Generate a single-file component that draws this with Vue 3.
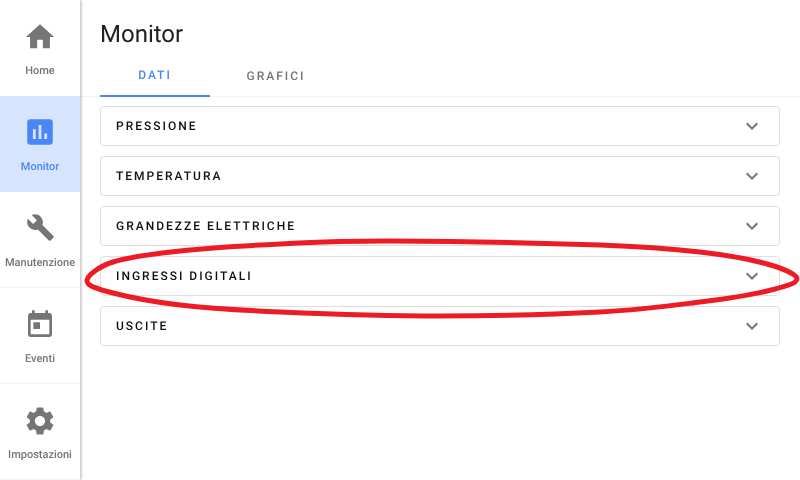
<script setup>
const nav = [
  { label: 'Home', size: 34, icon: 'M10 20v-6h4v6h5v-8h3L12 3 2 12h3v8z' },
  { label: 'Monitor', size: 34, active: true, icon: 'M19 3H5c-1.1 0-2 .9-2 2v14c0 1.1.9 2 2 2h14c1.100 0 2-.9 2-2V5c0-1.100-.9-2-2-2zM9 17H7v-7h2v7zm4 0h-2V7h2v10zm4 0h-2v-4h2v4z' },
  { label: 'Manutenzione', size: 29, icon: 'M22.700 19l-9.100-9.100c.9-2.300.4-5-1.500-6.900-2-2-5-2.400-7.400-1.300L9 6 6 9 1.600 4.700C.4 7.100.9 10.100 2.900 12.100c1.900 1.900 4.600 2.400 6.900 1.500l9.100 9.100c.4.400 1 .4 1.400 0l2.300-2.300c.5-.4.5-1.100.1-1.400z' },
  { label: 'Eventi', size: 32, icon: 'M19 3h-1V1h-2v2H8V1H6v2H5c-1.110 0-1.990.9-1.990 2L3 19c0 1.100.89 2 2 2h14c1.100 0 2-.9 2-2V5c0-1.100-.9-2-2-2zm0 16H5V8h14v11zM7 10h5v5H7z' },
  { label: 'Impostazioni', size: 34, icon: 'M19.140 12.940c.04-.3.06-.61.06-.94 0-.32-.02-.64-.07-.94l2.030-1.580c.18-.14.23-.41.12-.61l-1.920-3.320c-.12-.22-.37-.29-.59-.22l-2.390.96c-.5-.38-1.030-.7-1.620-.94l-.36-2.540c-.04-.24-.24-.41-.48-.41h-3.840c-.24 0-.43.17-.47.41l-.36 2.540c-.59.24-1.130.57-1.620.94l-2.390-.96c-.22-.08-.47 0-.59.22L2.740 8.870c-.12.21-.08.47.12.61l2.030 1.580c-.05.3-.09.63-.09.94s.02.64.07.94l-2.030 1.580c-.18.14-.23.41-.12.61l1.920 3.320c.12.22.37.29.59.22l2.390-.96c.5.38 1.030.7 1.620.94l.36 2.540c.05.24.24.41.48.41h3.840c.24 0 .44-.17.47-.41l.36-2.540c.59-.24 1.130-.56 1.620-.94l2.390.96c.22.08.47 0 .59-.22l1.920-3.320c.12-.22.07-.47-.12-.61l-2.010-1.580zM12 15.600c-1.980 0-3.600-1.620-3.600-3.600s1.620-3.600 3.600-3.600 3.600 1.620 3.600 3.600-1.620 3.600-3.600 3.600z' }
]
const panels = ['PRESSIONE', 'TEMPERATURA', 'GRANDEZZE ELETTRICHE', 'INGRESSI DIGITALI', 'USCITE']

// Hand-drawn loop traced from the reference, smoothed with a closed Catmull-Rom spline.
const pts = [
  [797, 279], [767, 291], [700, 302], [600, 312], [440, 316], [280, 312], [180, 305], [113, 293],
  [87, 281], [113, 262], [180, 251], [280, 244], [390, 241], [600, 245], [700, 252], [767, 264]
]
const n = pts.length
let loop = `M${pts[0][0]} ${pts[0][1]}`
for (let i = 0; i < n; i++) {
  const p0 = pts[(i - 1 + n) % n], p1 = pts[i], p2 = pts[(i + 1) % n], p3 = pts[(i + 2) % n]
  const c1x = p1[0] + (p2[0] - p0[0]) / 6, c1y = p1[1] + (p2[1] - p0[1]) / 6
  const c2x = p2[0] - (p3[0] - p1[0]) / 6, c2y = p2[1] - (p3[1] - p1[1]) / 6
  loop += ` C${c1x} ${c1y} ${c2x} ${c2y} ${p2[0]} ${p2[1]}`
}
loop += ' Z'
</script>

<template>
  <div class="app">
    <nav class="sidebar">
      <div v-for="item in nav" :key="item.label" class="nav-item" :class="{ active: item.active }">
        <div class="icon-box">
          <svg class="nav-icon" viewBox="0 0 24 24" :width="item.size" :height="item.size"><path :d="item.icon" fill="currentColor" /></svg>
        </div>
        <span class="nav-label">{{ item.label }}</span>
      </div>
    </nav>
    <main class="main">
      <h1 class="title">Monitor</h1>
      <div class="tabs">
        <div class="tab tab-active">DATI</div>
        <div class="tab">GRAFICI</div>
      </div>
      <div class="panels">
        <div v-for="p in panels" :key="p" class="panel">
          <span class="panel-title">{{ p }}</span>
          <svg viewBox="0 0 24 24" width="24" height="24"><path d="M7.410 8.590 12 13.170l4.590-4.580L18 10l-6 6-6-6z" fill="#757575" /></svg>
        </div>
      </div>
    </main>
    <svg class="mark" width="800" height="480" viewBox="0 0 800 480">
      <path :d="loop" fill="none" stroke="#ed1c24" stroke-width="5" />
    </svg>
  </div>
</template>

<style>
html, body { margin: 0; background: #fff; }
</style>

<style scoped>
.app {
  position: relative;
  display: flex;
  width: 800px;
  height: 480px;
  overflow: hidden;
  font-family: Roboto, "Liberation Sans", sans-serif;
  text-rendering: geometricPrecision;
  will-change: transform;
}
.sidebar {
  flex: 0 0 80px;
  width: 80px;
  height: 480px;
  box-shadow: 1px 0 3px rgba(0, 0, 0, 0.3);
  z-index: 1;
}
.nav-item {
  box-sizing: border-box;
  height: 96px;
  display: flex;
  flex-direction: column;
  align-items: center;
  padding-top: 20px;
  color: #757575;
  border-bottom: 1px solid #f2f2f2;
}
.nav-item:first-child { border-bottom-color: transparent; }
.nav-item.active {
  background: #d6e4fd;
  color: #4a86f7;
  border-bottom-color: #d6e4fd;
}
.nav-item:nth-child(2) { border-bottom-color: transparent; }
.icon-box {
  height: 34px;
  display: flex;
  align-items: center;
  justify-content: center;
}
.nav-icon { display: block; flex: none; }
.nav-item.active .nav-icon { margin-bottom: 2px; }
.nav-item:nth-child(3) .nav-icon { margin-bottom: 3px; }
.nav-label {
  margin-top: 10px;
  font-size: 11px;
  line-height: 14px;
  font-weight: 500;
  white-space: nowrap;
}
.main {
  flex: 1;
  padding: 0 20px;
}
.title {
  margin: 0;
  padding-top: 19px;
  height: 33px;
  font-size: 24px;
  line-height: 30px;
  font-weight: 400;
  color: #212121;
}
.tabs {
  display: grid;
  grid-template-columns: 110px 132px;
  height: 44px;
  margin: 0 -20px;
  padding: 0 20px;
  border-bottom: 1px solid #f2f2f2;
}
.tab {
  box-sizing: border-box;
  height: 45px;
  padding-top: 3px;
  display: flex;
  align-items: center;
  justify-content: center;
  font-size: 12px;
  font-weight: 500;
  letter-spacing: 2px;
  color: #757575;
}
.tab-active {
  color: #4a86f7;
  border-bottom: 2px solid #4a86f7;
}
.panels {
  display: flex;
  flex-direction: column;
  gap: 10px;
  margin-top: 9px;
}
.panel {
  box-sizing: border-box;
  height: 40px;
  display: flex;
  align-items: center;
  justify-content: space-between;
  padding: 0 15px;
  border: 1px solid #dedede;
  border-radius: 4px;
}
.panel-title {
  font-size: 12px;
  font-weight: 500;
  letter-spacing: 2px;
  color: #111;
}
.mark {
  position: absolute;
  left: 0;
  top: 0;
  z-index: 2;
  pointer-events: none;
}
</style>
